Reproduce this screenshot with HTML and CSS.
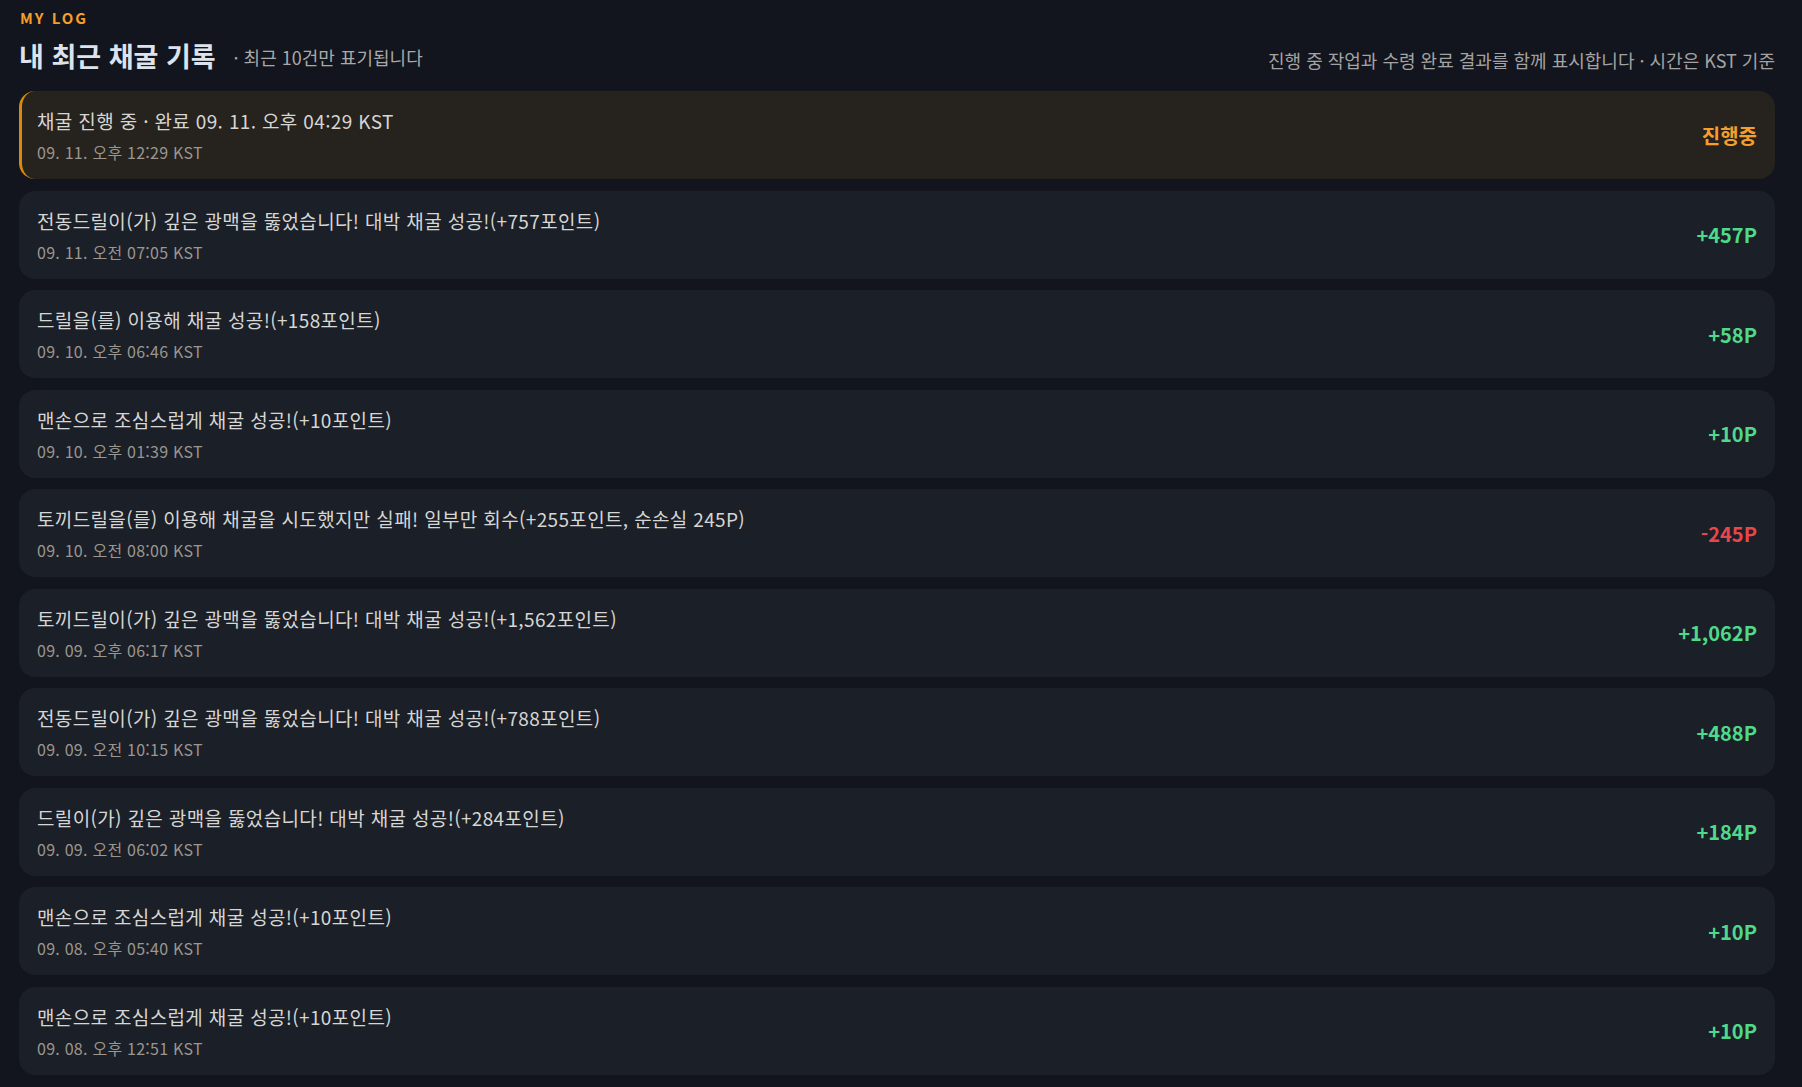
FILE: index.html
```html
<!DOCTYPE html>
<html lang="ko">
<head>
    <meta charset="UTF-8">
    <meta name="viewport" content="width=device-width, initial-scale=1.0">
    <title>내 최근 채굴 기록</title>
    <link rel="stylesheet" href="styles.css">
</head>
<body>
    <div class="log-page">
        <div class="log-eyebrow">MY LOG</div>

        <div class="log-header">
            <div class="log-title-wrap">
                <h1 class="log-title">내 최근 채굴 기록</h1>
                <span class="log-sub">· 최근 10건만 표기됩니다</span>
            </div>
            <div class="log-note">진행 중 작업과 수령 완료 결과를 함께 표시합니다 · 시간은 KST 기준</div>
        </div>

        <!-- 최근 10건 -->
        <ul class="log-list">
            <li class="log-item pending">
                <div class="log-text">
                    <div class="log-msg">채굴 진행 중 · 완료 09. 11. 오후 04:29 KST</div>
                    <div class="log-date">09. 11. 오후 12:29 KST</div>
                </div>
                <div class="log-value orange">진행중</div>
            </li>
            <li class="log-item">
                <div class="log-text">
                    <div class="log-msg">전동드릴이(가) 깊은 광맥을 뚫었습니다! 대박 채굴 성공!(+757포인트)</div>
                    <div class="log-date">09. 11. 오전 07:05 KST</div>
                </div>
                <div class="log-value plus">+457P</div>
            </li>
            <li class="log-item">
                <div class="log-text">
                    <div class="log-msg">드릴을(를) 이용해 채굴 성공!(+158포인트)</div>
                    <div class="log-date">09. 10. 오후 06:46 KST</div>
                </div>
                <div class="log-value plus">+58P</div>
            </li>
            <li class="log-item">
                <div class="log-text">
                    <div class="log-msg">맨손으로 조심스럽게 채굴 성공!(+10포인트)</div>
                    <div class="log-date">09. 10. 오후 01:39 KST</div>
                </div>
                <div class="log-value plus">+10P</div>
            </li>
            <li class="log-item">
                <div class="log-text">
                    <div class="log-msg">토끼드릴을(를) 이용해 채굴을 시도했지만 실패! 일부만 회수(+255포인트, 순손실 245P)</div>
                    <div class="log-date">09. 10. 오전 08:00 KST</div>
                </div>
                <div class="log-value minus">-245P</div>
            </li>
            <li class="log-item">
                <div class="log-text">
                    <div class="log-msg">토끼드릴이(가) 깊은 광맥을 뚫었습니다! 대박 채굴 성공!(+1,562포인트)</div>
                    <div class="log-date">09. 09. 오후 06:17 KST</div>
                </div>
                <div class="log-value plus">+1,062P</div>
            </li>
            <li class="log-item">
                <div class="log-text">
                    <div class="log-msg">전동드릴이(가) 깊은 광맥을 뚫었습니다! 대박 채굴 성공!(+788포인트)</div>
                    <div class="log-date">09. 09. 오전 10:15 KST</div>
                </div>
                <div class="log-value plus">+488P</div>
            </li>
            <li class="log-item">
                <div class="log-text">
                    <div class="log-msg">드릴이(가) 깊은 광맥을 뚫었습니다! 대박 채굴 성공!(+284포인트)</div>
                    <div class="log-date">09. 09. 오전 06:02 KST</div>
                </div>
                <div class="log-value plus">+184P</div>
            </li>
            <li class="log-item">
                <div class="log-text">
                    <div class="log-msg">맨손으로 조심스럽게 채굴 성공!(+10포인트)</div>
                    <div class="log-date">09. 08. 오후 05:40 KST</div>
                </div>
                <div class="log-value plus">+10P</div>
            </li>
            <li class="log-item">
                <div class="log-text">
                    <div class="log-msg">맨손으로 조심스럽게 채굴 성공!(+10포인트)</div>
                    <div class="log-date">09. 08. 오후 12:51 KST</div>
                </div>
                <div class="log-value plus">+10P</div>
            </li>
        </ul>
    </div>
</body>
</html>
```

FILE: styles.css
```css
body {
    margin: 0;
    background-color: #12151d;
    font-family: "Noto Sans CJK KR", "Noto Sans", sans-serif;
    color: #d8d8d8;
}
.log-page {
    padding: 8px 27px 14px 19px;
}
.log-eyebrow {
    color: #f59e2b;
    font-size: 15px;
    font-weight: 700;
    letter-spacing: 2px;
    line-height: 20px;
    margin-left: 1px;
}
.log-header {
    display: flex;
    justify-content: space-between;
    align-items: flex-end;
    margin-top: 10px;
    margin-bottom: 17px;
}
.log-title-wrap {
    display: flex;
    align-items: baseline;
    gap: 18px;
}
.log-title {
    margin: 0;
    font-size: 27px;
    font-weight: 700;
    line-height: 36px;
    color: #dde3ec;
}
.log-sub {
    font-size: 18px;
    color: #a9a9a9;
    position: relative;
    top: -2px; /* sits a touch above the title baseline */
}
.log-note {
    font-size: 18px;
    color: #a3a3a3;
    line-height: 26px;
    margin-bottom: 1px;
}
.log-list {
    list-style: none;
    margin: 0;
    padding: 0;
    display: flex;
    flex-direction: column;
    gap: 11.5px;
}
.log-item {
    display: flex;
    align-items: center;
    justify-content: space-between;
    background-color: #1b1f27;
    border-left: 3px solid transparent;
    border-radius: 16px;
    padding: 16px 18px 16px 15px;
}
.log-item.pending {
    background-color: #26221e;
    border-left-color: #d88a0b;
}
.log-msg {
    font-size: 19px;
    letter-spacing: 0.35px;
    line-height: 28px;
    color: #d6d6d4;
}
.log-date {
    font-size: 16px;
    letter-spacing: 0.25px;
    line-height: 22px;
    margin-top: 6px;
    color: #9b968e;
}
.log-value {
    font-size: 20px;
    font-weight: 700;
}
.log-value.plus {
    color: #4fd98a;
}
.log-value.minus {
    color: #e8464a;
}
.log-value.orange {
    color: #f59e2b;
}
```
